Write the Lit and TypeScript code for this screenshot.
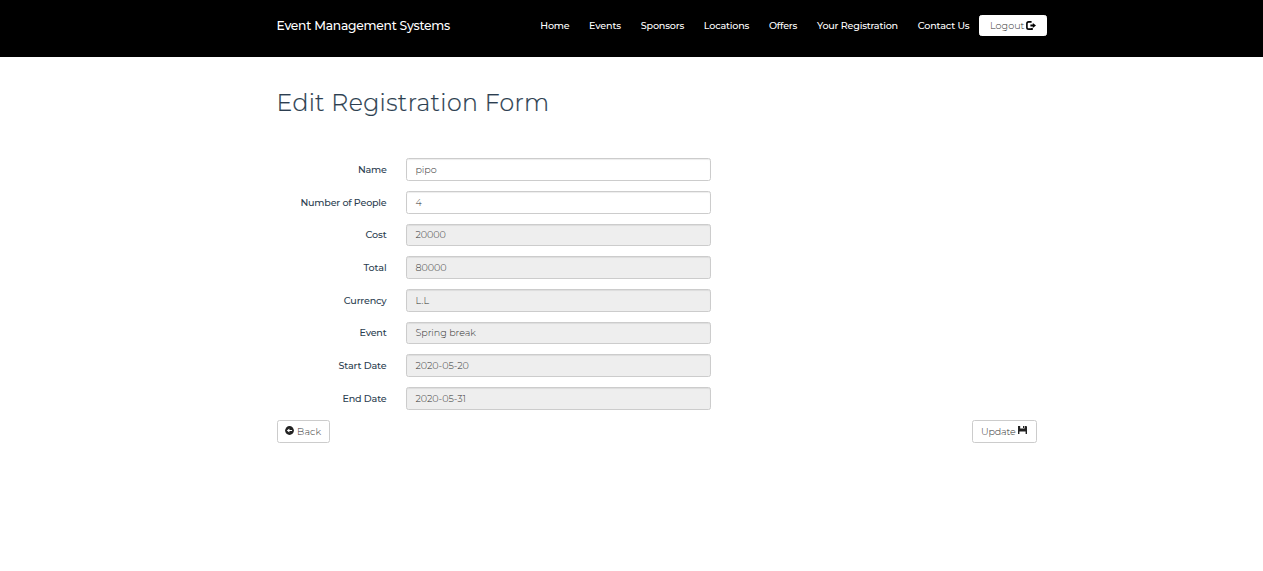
import { LitElement, html, css, svg } from "lit";
import { customElement, property } from "lit/decorators.js";

/** A run of text whose tracking is adjusted so that it spans the given width. */
@customElement("fit-text")
export class FitText extends LitElement {
  static styles = css`
    :host { display: inline-block; white-space: nowrap; flex: none; }
    .run { display: inline-block; }
  `;
  @property({ type: Number }) span = 0;
  @property() text = "";

  render() {
    return html`<span class="run">${this.text}</span>`;
  }

  updated() {
    const run = this.renderRoot.querySelector<HTMLElement>(".run")!;
    run.style.letterSpacing = "0px";
    const natural = run.getBoundingClientRect().width;
    const gap = (this.span - natural) / this.text.length;
    run.style.letterSpacing = `${gap}px`;
    this.style.width = `${this.span}px`;
  }
}

const logoutIcon = svg`<svg class="icon" viewBox="0 0 10 9" width="10" height="9">
  <path d="M5.6 .9H2.7Q.9 .9 .9 2.6v3.8Q.9 8.1 2.7 8.1H6V6.9" fill="none" stroke="#000" stroke-width="1.6"/>
  <path d="M4.4 3.6H6.8V1.9L10 4.5 6.8 7.1V5.4H4.4z"/></svg>`;
const backIcon = svg`<svg class="icon" viewBox="0 0 9 9" width="9" height="9">
  <circle cx="4.5" cy="4.5" r="4.4"/>
  <path d="M1.8 4.5 4.4 2.4V3.9H7.1V5.1H4.4V6.6z" fill="#fff"/></svg>`;
const saveIcon = svg`<svg class="icon" viewBox="0 0 9 8" width="9" height="8">
  <path d="M0 0H2.2V2.6H6.6V0H8.4L9 .7V8H7.6V5.4H1.4V8H0z"/>
  <path d="M5 0H6V2H5z"/></svg>`;

@customElement("app-root")
export class AppRoot extends LitElement {
  static styles = css`
    :host {
      display: block;
      height: 571px;
      background: #fff;
      font-family: Montserrat, Inter, "Open Sans", sans-serif;
      font-size: 9.6px;
      line-height: 14px;
      color: #2c3e50;
    }
    * { box-sizing: border-box; }
    .bar { height: 57px; background: #000; color: #fff; }
    .inner {
      width: 770px;
      margin-left: 276.5px;
      display: flex;
      align-items: flex-start;
      justify-content: space-between;
      padding-top: 15px;
    }
    .brand { font-size: 12.3px; font-weight: 500; line-height: 22px; }
    .links { display: flex; gap: 19.75px; font-weight: 500; }
    .links fit-text { line-height: 22px; }
    .menu { display: flex; gap: 9.5px; margin-right: -0.5px; }
    .btn {
      display: flex;
      align-items: center;
      border: 1px solid #ccc;
      border-radius: 2.5px;
      background: #fff;
      color: #333;
      font: inherit;
      font-weight: 300;
      height: 23px;
      padding: 0 8px;
      white-space: nowrap;
    }
    .icon { display: block; flex: none; fill: #222; }
    .logout { width: 68px; height: 21px; padding: 0 10px; gap: 1.5px; border-color: #fff; }
    .logout .icon { fill: #000; }
    .page { width: 760px; margin-left: 277px; }
    h1 {
      margin: 0 0 0 -0.5px;
      padding-top: 30px;
      height: 101.15px;
      font-size: 23.6px;
      line-height: 32px;
      font-weight: 300;
      -webkit-text-stroke: 0.2px #2c3e50;
    }
    .row { display: flex; height: 22.7px; margin-bottom: 10px; }
    .label {
      width: 109.5px;
      margin-right: 19.5px;
      padding-top: 0.75px;
      text-align: right;
      font-weight: 500;
      line-height: 22.7px;
    }
    .field {
      width: 305px;
      border: 1px solid #ccc;
      border-radius: 2.5px;
      box-shadow: inset 0 1px 1px rgba(0, 0, 0, 0.075);
      padding: 0.75px 0 0 8.4px;
      line-height: 20.7px;
      font-weight: 300;
      color: #333;
      background: #fff;
    }
    .locked { background: #eee; }
    .actions { display: flex; justify-content: space-between; }
    .actions fit-text { margin-top: 1px; }
    .back { width: 53px; gap: 2.7px; padding-left: 7.4px; }
    .back .icon { margin-bottom: 2px; }
    .update .icon { margin-bottom: 3px; }
    .update { width: 65px; gap: 2px; }
  `;

  private links: [string, number][] = [
    ["Home", 29], ["Events", 32], ["Sponsors", 43.3], ["Locations", 45.3],
    ["Offers", 28.3], ["Your Registration", 81], ["Contact Us", 51.8],
  ];

  private rows: [string, number, string, number, boolean][] = [
    ["Name", 28.5, "pipo", 21.3, false],
    ["Number of People", 86, "4", 7, false],
    ["Cost", 21, "20000", 30.5, true],
    ["Total", 23, "80000", 31, true],
    ["Currency", 42.7, "L.L", 13.7, true],
    ["Event", 27, "Spring break", 60.5, true],
    ["Start Date", 48, "2020-05-20", 53.3, true],
    ["End Date", 44, "2020-05-31", 50.5, true],
  ];

  render() {
    return html`
      <header class="bar">
        <div class="inner">
          <fit-text class="brand" text="Event Management Systems" span="173.5"></fit-text>
          <div class="menu">
            <nav class="links">
              ${this.links.map(([t, w]) => html`<fit-text .text=${t} .span=${w}></fit-text>`)}
            </nav>
            <button class="btn logout"><fit-text text="Logout" span="34.5"></fit-text>${logoutIcon}</button>
          </div>
        </div>
      </header>
      <main class="page">
        <h1><fit-text text="Edit Registration Form" span="273"></fit-text></h1>
        ${this.rows.map(([label, lw, value, vw, locked]) => html`
          <div class="row">
            <div class="label"><fit-text .text=${label} .span=${lw}></fit-text></div>
            <div class="field ${locked ? "locked" : ""}"><fit-text .text=${value} .span=${vw}></fit-text></div>
          </div>`)}
        <div class="actions">
          <button class="btn back">${backIcon}<fit-text text="Back" span="24"></fit-text></button>
          <button class="btn update"><fit-text text="Update" span="34.5"></fit-text>${saveIcon}</button>
        </div>
      </main>
    `;
  }
}
